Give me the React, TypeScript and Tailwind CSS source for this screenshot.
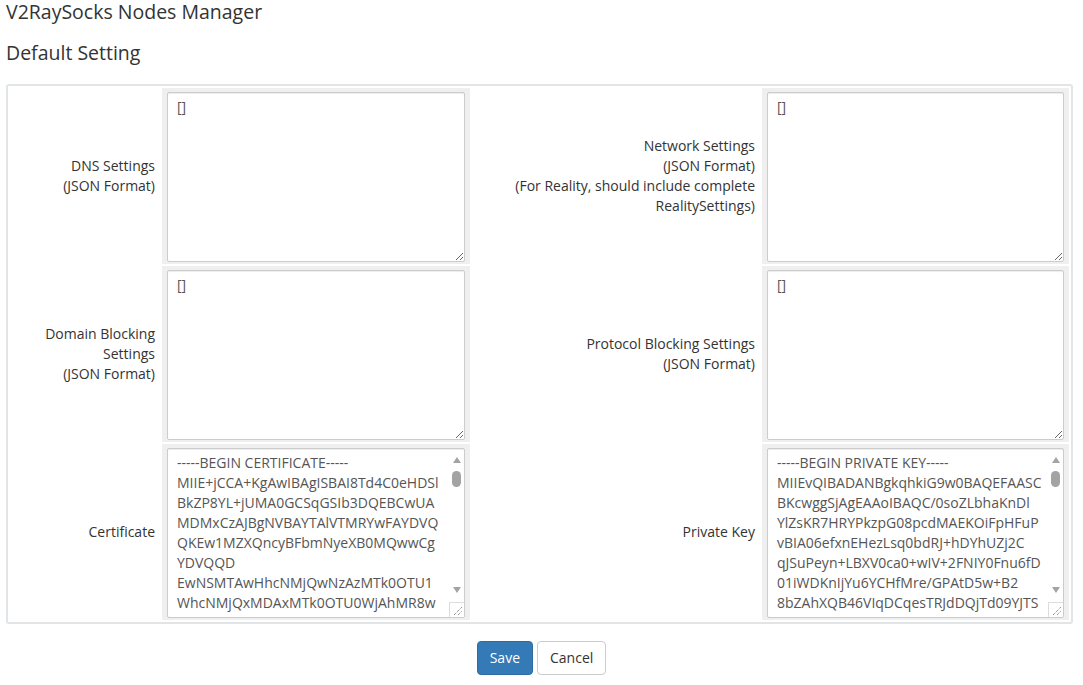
import React from "react";

const font = { fontFamily: '"Open Sans", "Noto Sans", Arial, sans-serif' };

const CERT = [
  "-----BEGIN CERTIFICATE-----",
  "MIIE+jCCA+KgAwIBAgISBAI8Td4C0eHDSl",
  "BkZP8YL+jUMA0GCSqGSIb3DQEBCwUA",
  "MDMxCzAJBgNVBAYTAlVTMRYwFAYDVQ",
  "QKEw1MZXQncyBFbmNyeXB0MQwwCg",
  "YDVQQD",
  "EwNSMTAwHhcNMjQwNzAzMTk0OTU1",
  "WhcNMjQxMDAxMTk0OTU0WjAhMR8w",
  "MB0GA1UEAxMWbm9kZS5leGFtcGxlLmNvbTCCASIw",
];

const KEY = [
  "-----BEGIN PRIVATE KEY-----",
  "MIIEvQIBADANBgkqhkiG9w0BAQEFAASC",
  "BKcwggSjAgEAAoIBAQC/0soZLbhaKnDl",
  "YlZsKR7HRYPkzpG08pcdMAEKOiFpHFuP",
  "vBIA06efxnEHezLsq0bdRJ+hDYhUZj2C",
  "qJSuPeyn+LBXV0ca0+wIV+2FNIY0Fnu6fD",
  "01iWDKnIjYu6YCHfMre/GPAtD5w+B2",
  "8bZAhXQB46VIqDCqesTRJdDQjTd09YJTS",
  "kF3mQ2xLr8VbN0cH5tYpW7aZs1eGd4UiO",
];

function Label({ lines }: { lines: string[] }) {
  return (
    <div className="flex flex-col items-end justify-center pr-[5px] text-right text-[14px] leading-[20px] text-[#333]">
      {lines.map((l) => (
        <span key={l} className="block">
          {l}
        </span>
      ))}
    </div>
  );
}

function JsonField({ value }: { value: string }) {
  return (
    <div className="bg-[#efefef] px-[5px] pt-[4px] pb-[2px]">
      <textarea
        defaultValue={value}
        className="block h-[170px] w-full rounded-[2px] border border-[#cccccc] bg-white pl-[9px] pr-[6px] pt-[4px] text-[14px] leading-[20px] text-[#555] shadow-[inset_0_1px_1px_rgba(0,0,0,0.075)] outline-none"
        style={font}
      />
    </div>
  );
}

function Arrow({ up }: { up?: boolean }) {
  return (
    <svg width="8" height="6" viewBox="0 0 8 6" className="block shrink-0">
      {up ? (
        <polygon points="4,0 8,6 0,6" fill="#a3a3a3" />
      ) : (
        <polygon points="0,0 8,0 4,6" fill="#a3a3a3" />
      )}
    </svg>
  );
}

function PemField({ lines }: { lines: string[] }) {
  return (
    <div className="bg-[#efefef] px-[5px] pt-[4px] pb-[2px]">
      <div className="flex h-[170px] w-full overflow-hidden rounded-[2px] border border-[#cccccc] bg-white shadow-[inset_0_1px_1px_rgba(0,0,0,0.075)]">
        <textarea
          readOnly
          value={lines.join("\n")}
          className="block min-w-0 flex-1 resize-none overflow-hidden whitespace-pre bg-transparent pl-[9px] pt-[4px] text-[14px] leading-[20px] text-[#555] outline-none"
          style={font}
        />
        {/* scrollbar track with arrows, thumb and resize corner */}
        <div className="flex w-[15px] shrink-0 flex-col items-center">
          <div className="mt-[8px]">
            <Arrow up />
          </div>
          <div className="mt-[8px] h-[16px] w-[9px] rounded-full bg-[#a3a3a3]" />
          <div className="flex-1" />
          <Arrow />
          <div className="h-[9px]" />
          <div className="flex h-[15px] w-full items-end justify-end border-l border-t border-[#dddddd] bg-white p-[2px]">
            <svg width="9" height="9" viewBox="0 0 9 9">
              <line x1="1" y1="9" x2="9" y2="1" stroke="#666" strokeWidth="1" strokeDasharray="1 1" />
              <line x1="5" y1="9" x2="9" y2="5" stroke="#666" strokeWidth="1" strokeDasharray="1 1" />
            </svg>
          </div>
        </div>
      </div>
    </div>
  );
}

export default function App() {
  return (
    <div className="min-h-screen bg-white px-[6px] text-[#333]" style={font}>
      <h1 className="text-[19.5px] font-normal leading-[24px]">V2RaySocks Nodes Manager</h1>
      <h2 className="mt-[17px] text-[19.5px] font-normal leading-[24px]">Default Setting</h2>

      <div className="mt-[19px] w-[1067px] rounded-[3px] border-2 border-[#e1e5e8] bg-white p-[2px]">
        <div className="grid grid-cols-[150px_308px_288px_1fr] gap-[2px]">
          <Label lines={["DNS Settings", "(JSON Format)"]} />
          <JsonField value="[]" />
          <Label
            lines={[
              "Network Settings",
              "(JSON Format)",
              "(For Reality, should include complete",
              "RealitySettings)",
            ]}
          />
          <JsonField value="[]" />

          <Label lines={["Domain Blocking", "Settings", "(JSON Format)"]} />
          <JsonField value="[]" />
          <Label lines={["Protocol Blocking Settings", "(JSON Format)"]} />
          <JsonField value="[]" />

          <Label lines={["Certificate"]} />
          <PemField lines={CERT} />
          <Label lines={["Private Key"]} />
          <PemField lines={KEY} />
        </div>
      </div>

      <div className="mt-[17px] flex justify-center gap-[4px]">
        <button className="h-[34px] rounded-[4px] border border-[#2e6da4] bg-[#337ab7] px-[12px] text-[14px] leading-[20px] text-white">
          Save
        </button>
        <button className="h-[34px] rounded-[4px] border border-[#cccccc] bg-white px-[12px] text-[14px] leading-[20px] text-[#333]">
          Cancel
        </button>
      </div>
    </div>
  );
}
